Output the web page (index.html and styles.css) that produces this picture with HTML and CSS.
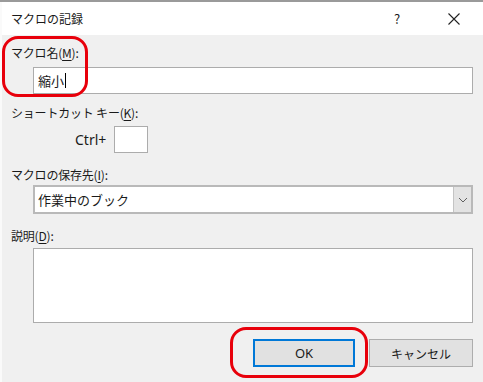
FILE: index.html
```html
<!DOCTYPE html>
<html lang="ja">
<head>
  <meta charset="UTF-8">
  <title>マクロの記録</title>
  <link rel="stylesheet" href="styles.css">
</head>
<body>
  <div class="dialog">
    <!-- Title bar -->
    <div class="titlebar">
      <span class="title">マクロの記録</span>
      <span class="help">?</span>
      <span class="close">
        <svg width="12" height="12" viewBox="0 0 12 12">
          <path d="M0.5 0.5 L11.5 11.5 M11.5 0.5 L0.5 11.5" stroke="#222" stroke-width="1.1" fill="none"/>
        </svg>
      </span>
    </div>

    <!-- Form body -->
    <div class="body">
      <div class="label first">マクロ名(<u>M</u>):</div>
      <div class="field name-field">縮小<span class="caret"></span></div>

      <div class="label shortcut-label">ショートカット キー(<u>K</u>):</div>
      <div class="ctrl-row">
        <span class="ctrl-text">Ctrl+</span>
        <div class="key-box"></div>
      </div>

      <div class="label store-label">マクロの保存先(<u>I</u>):</div>
      <div class="select">
        <span class="select-text">作業中のブック</span>
        <span class="select-btn">
          <svg width="10" height="6" viewBox="0 0 10 6">
            <path d="M1 1 L5 5 L9 1" stroke="#606060" stroke-width="1" fill="none"/>
          </svg>
        </span>
      </div>

      <div class="label desc-label">説明(<u>D</u>):</div>
      <div class="textarea"></div>

      <div class="buttons">
        <div class="btn btn-ok">OK</div>
        <div class="btn">キャンセル</div>
      </div>
    </div>

    <!-- Red highlight marks -->
    <div class="mark mark-name"></div>
    <div class="mark mark-ok"></div>
  </div>
</body>
</html>
```

FILE: styles.css
```css
/* Reset */
* {
  margin: 0;
  padding: 0;
  box-sizing: border-box;
}

html, body {
  width: 100%;
  height: 100%;
  overflow: hidden;
}

body {
  background-color: #fafafa;
  border-top: 2px solid #9a9a9a;
  font-family: "Noto Sans CJK JP", "Noto Sans", sans-serif;
  font-size: 12px;
  color: #1a1a1a;
}

/* Dialog Window */
.dialog {
  position: relative;
  margin-left: 2px;
  width: 481px;
  height: 380px;
  background-color: #f0f0f0;
}

.titlebar {
  height: 33px;
  background-color: #fff;
  display: flex;
  align-items: center;
  padding-left: 9px;
}

.title {
  flex-grow: 1;
  font-size: 12px;
}

.help {
  width: 20px;
  font-size: 13px;
  margin-right: 34px;
}

.close {
  display: flex;
  align-items: center;
  margin-right: 23px;
}

/* Form Body */
.body {
  padding: 0 10px 0 9px;
}

.label {
  height: 16px;
  line-height: 16px;
  font-size: 12px;
  letter-spacing: -0.2px;
}

.label u {
  text-underline-offset: 2px;
}

.first {
  margin-top: 10px;
}

.field {
  margin-top: 6px;
  margin-left: 22px;
  height: 27px;
  background-color: #fff;
  border: 1px solid #acacac;
  display: flex;
  align-items: center;
  padding-left: 4px;
  font-size: 13px;
}

.caret {
  display: inline-block;
  width: 1px;
  height: 15px;
  background-color: #000;
  margin-left: 1px;
}

.shortcut-label {
  margin-top: 11px;
}

.ctrl-row {
  display: flex;
  align-items: center;
  margin-top: 5px;
  padding-left: 64px;
}

.ctrl-text {
  width: 39px;
  font-family: "Noto Sans", sans-serif;
  font-size: 14px;
}

.key-box {
  width: 34px;
  height: 27px;
  background-color: #fff;
  border: 1px solid #acacac;
}

.store-label {
  margin-top: 14px;
}

.select {
  margin-top: 2px;
  margin-left: 22px;
  height: 29px;
  background-color: #fff;
  border: 2px solid #b9b9b9;
  display: flex;
  align-items: center;
}

.select-text {
  flex-grow: 1;
  padding-left: 3px;
  font-size: 13px;
}

.select-btn {
  width: 18px;
  height: 100%;
  background-color: #e3e3e3;
  border-left: 1px solid #c4c4c4;
  display: flex;
  align-items: center;
  justify-content: center;
}

.desc-label {
  margin-top: 14px;
}

.textarea {
  margin-top: 4px;
  margin-left: 22px;
  height: 75px;
  background-color: #fff;
  border: 1px solid #acacac;
}

/* Buttons */
.buttons {
  display: flex;
  justify-content: flex-end;
  gap: 14px;
  margin-top: 16px;
}

.btn {
  width: 104px;
  height: 28px;
  background-color: #e1e1e1;
  border: 1px solid #adadad;
  display: flex;
  align-items: center;
  justify-content: center;
  font-size: 12px;
}

.btn-ok {
  width: 102px;
  border: 2px solid #0078d7;
  font-family: "Noto Sans", sans-serif;
  font-size: 13px;
}

/* Red highlight marks drawn over the dialog */
.mark {
  position: absolute;
  border: 3px solid #e8000b;
  border-radius: 16px;
}

.mark-name {
  left: 0;
  top: 34px;
  width: 86px;
  height: 61px;
}

.mark-ok {
  left: 228px;
  top: 325px;
  width: 138px;
  height: 51px;
}
```
